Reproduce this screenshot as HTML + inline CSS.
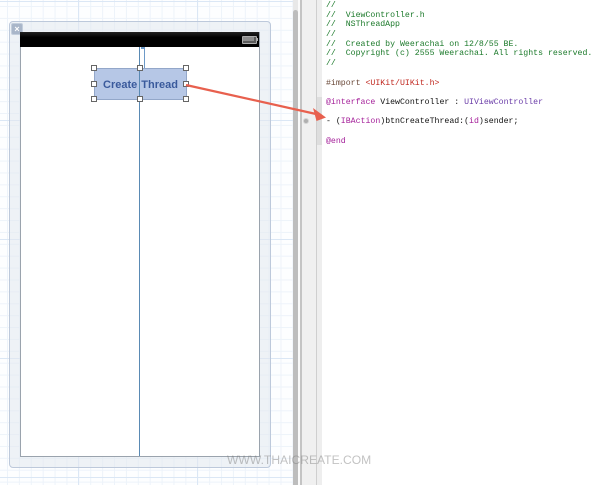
<!DOCTYPE html>
<html>
<head>
<meta charset="utf-8">
<style>
html,body{margin:0;padding:0;background:#fff;}
#p{position:relative;width:600px;height:485px;overflow:hidden;background:#fff;font-family:"Liberation Sans",sans-serif;}
#p div{position:absolute;}
.grid{
 background-color:#fdfeff;
 background-image:
  linear-gradient(to right,#dbe7f5 1px,transparent 1px),
  linear-gradient(to bottom,#dbe7f5 1px,transparent 1px),
  linear-gradient(to right,#edf3fa 1px,transparent 1px),
  linear-gradient(to bottom,#edf3fa 1px,transparent 1px);
 background-size:119px 119px,119px 119px,11.9px 11.9px,11.9px 11.9px;
 background-position:78px 0,0 1px,7px 0,0 6px;
}
.h{width:4px;height:4px;background:#fff;border:1px solid #666;}
pre{position:absolute;margin:0;left:326px;top:1px;font:8.22px/9.68px "Liberation Mono",monospace;color:#111;filter:blur(.35px);white-space:pre;}
.c{color:#1c7a2b}.s{color:#c0281f}.m{color:#a5219a}.t{color:#6a3ca8}.i{color:#6b4a3a}
</style>
</head>
<body>
<div id="p">
 <div class="grid" style="left:0;top:0;width:293px;height:485px"></div>
 <!-- scene frame -->
 <div style="left:9px;top:21px;width:260px;height:445px;background:rgba(226,231,238,.55);border:1px solid #bdc9db;border-radius:4px"></div>
 <div style="left:11px;top:23px;width:10px;height:10px;background:#a9b6c9;border:1px solid #c3cedc;border-radius:2px;color:#fff;font-size:9px;line-height:10px;text-align:center;font-weight:bold">×</div>
 <!-- view -->
 <div style="left:20px;top:32px;width:238px;height:424px;background:#fff;border:1px solid #9aa3ad;border-top:0"></div>
 <div style="left:20px;top:32px;width:239px;height:15px;background:linear-gradient(#222 0,#000 35%,#000 100%)"></div>
 <!-- battery -->
 <div style="left:242px;top:36px;width:13px;height:6px;background:#5a5a5a;border:1px solid #aaa;border-radius:1px"></div>
 <div style="left:243px;top:37px;width:11px;height:4px;background:#8c8c8c"></div>
 <div style="left:257px;top:38px;width:1px;height:3px;background:#aaa"></div>
 <!-- guides -->
 <div style="left:144px;top:47px;width:1px;height:21px;background:#6d9ac8"></div>
 <div style="left:141px;top:47px;width:4px;height:2px;background:#6d9ac8"></div>
 <!-- button -->
 <div style="left:94px;top:68px;width:91px;height:30px;background:#b6c7e6;border:1px solid #93a7c9;border-radius:2px"></div>
 <div style="left:94px;top:69px;width:93px;height:32px;text-align:center;font:bold 11px/32px 'Liberation Sans',sans-serif;color:#3a5a9c;filter:blur(.3px);word-spacing:1px">Create Thread</div>
 <div style="left:139px;top:47px;width:1px;height:409px;background:#5a8ab4"></div>
 <!-- handles -->
 <div class="h" style="left:91px;top:65px"></div>
 <div class="h" style="left:137px;top:65px"></div>
 <div class="h" style="left:183px;top:65px"></div>
 <div class="h" style="left:91px;top:81px"></div>
 <div class="h" style="left:183px;top:81px"></div>
 <div class="h" style="left:91px;top:96px"></div>
 <div class="h" style="left:137px;top:96px"></div>
 <div class="h" style="left:183px;top:96px"></div>
 <!-- gutter / scrollbar -->
 <div style="left:293px;top:0;width:5px;height:485px;background:#e8e8e8"></div>
 <div style="left:293px;top:10px;width:5px;height:475px;background:#bdbdbd;border-radius:3px 3px 0 0"></div>
 <div style="left:298px;top:0;width:2px;height:485px;background:#fafafa"></div>
 <div style="left:300px;top:0;width:2px;height:485px;background:#c4c4c4"></div>
 <div style="left:302px;top:0;width:14px;height:485px;background:#f0f0f0"></div>
 <div style="left:316px;top:0;width:1px;height:485px;background:#cfcfcf"></div>
 <div style="left:317px;top:0;width:5px;height:485px;background:#eeeeee"></div>
 <div style="left:317px;top:97px;width:5px;height:48px;background:#dedede"></div>
 <div style="left:303px;top:118px;width:4px;height:4px;background:#b0b0b0;border:1px solid #d4d4d4;border-radius:50%"></div>
<pre><span class="c">//
//  ViewController.h
//  NSThreadApp
//
//  Created by Weerachai on 12/8/55 BE.
//  Copyright (c) 2555 Weerachai. All rights reserved.
//</span>

<span class="i">#import</span> <span class="s">&lt;UIKit/UIKit.h&gt;</span>

<span class="m">@interface</span> ViewController : <span class="t">UIViewController</span>

- (<span class="m">IBAction</span>)btnCreateThread:(<span class="m">id</span>)sender;

<span class="m">@end</span></pre>
 <!-- arrow -->
 <svg style="position:absolute;left:0;top:0" width="600" height="485">
  <line x1="186" y1="85" x2="316" y2="114" stroke="#e8604e" stroke-width="2.2"/>
  <path d="M326 117.5 L313 108 L316.5 121 Z" fill="#e8604e"/>
 </svg>
 <div style="left:227px;top:452px;font:12.1px/16px 'Liberation Sans',sans-serif;color:rgba(120,120,120,.45);white-space:nowrap">WWW.THAICREATE.COM</div>
</div>
</body>
</html>
